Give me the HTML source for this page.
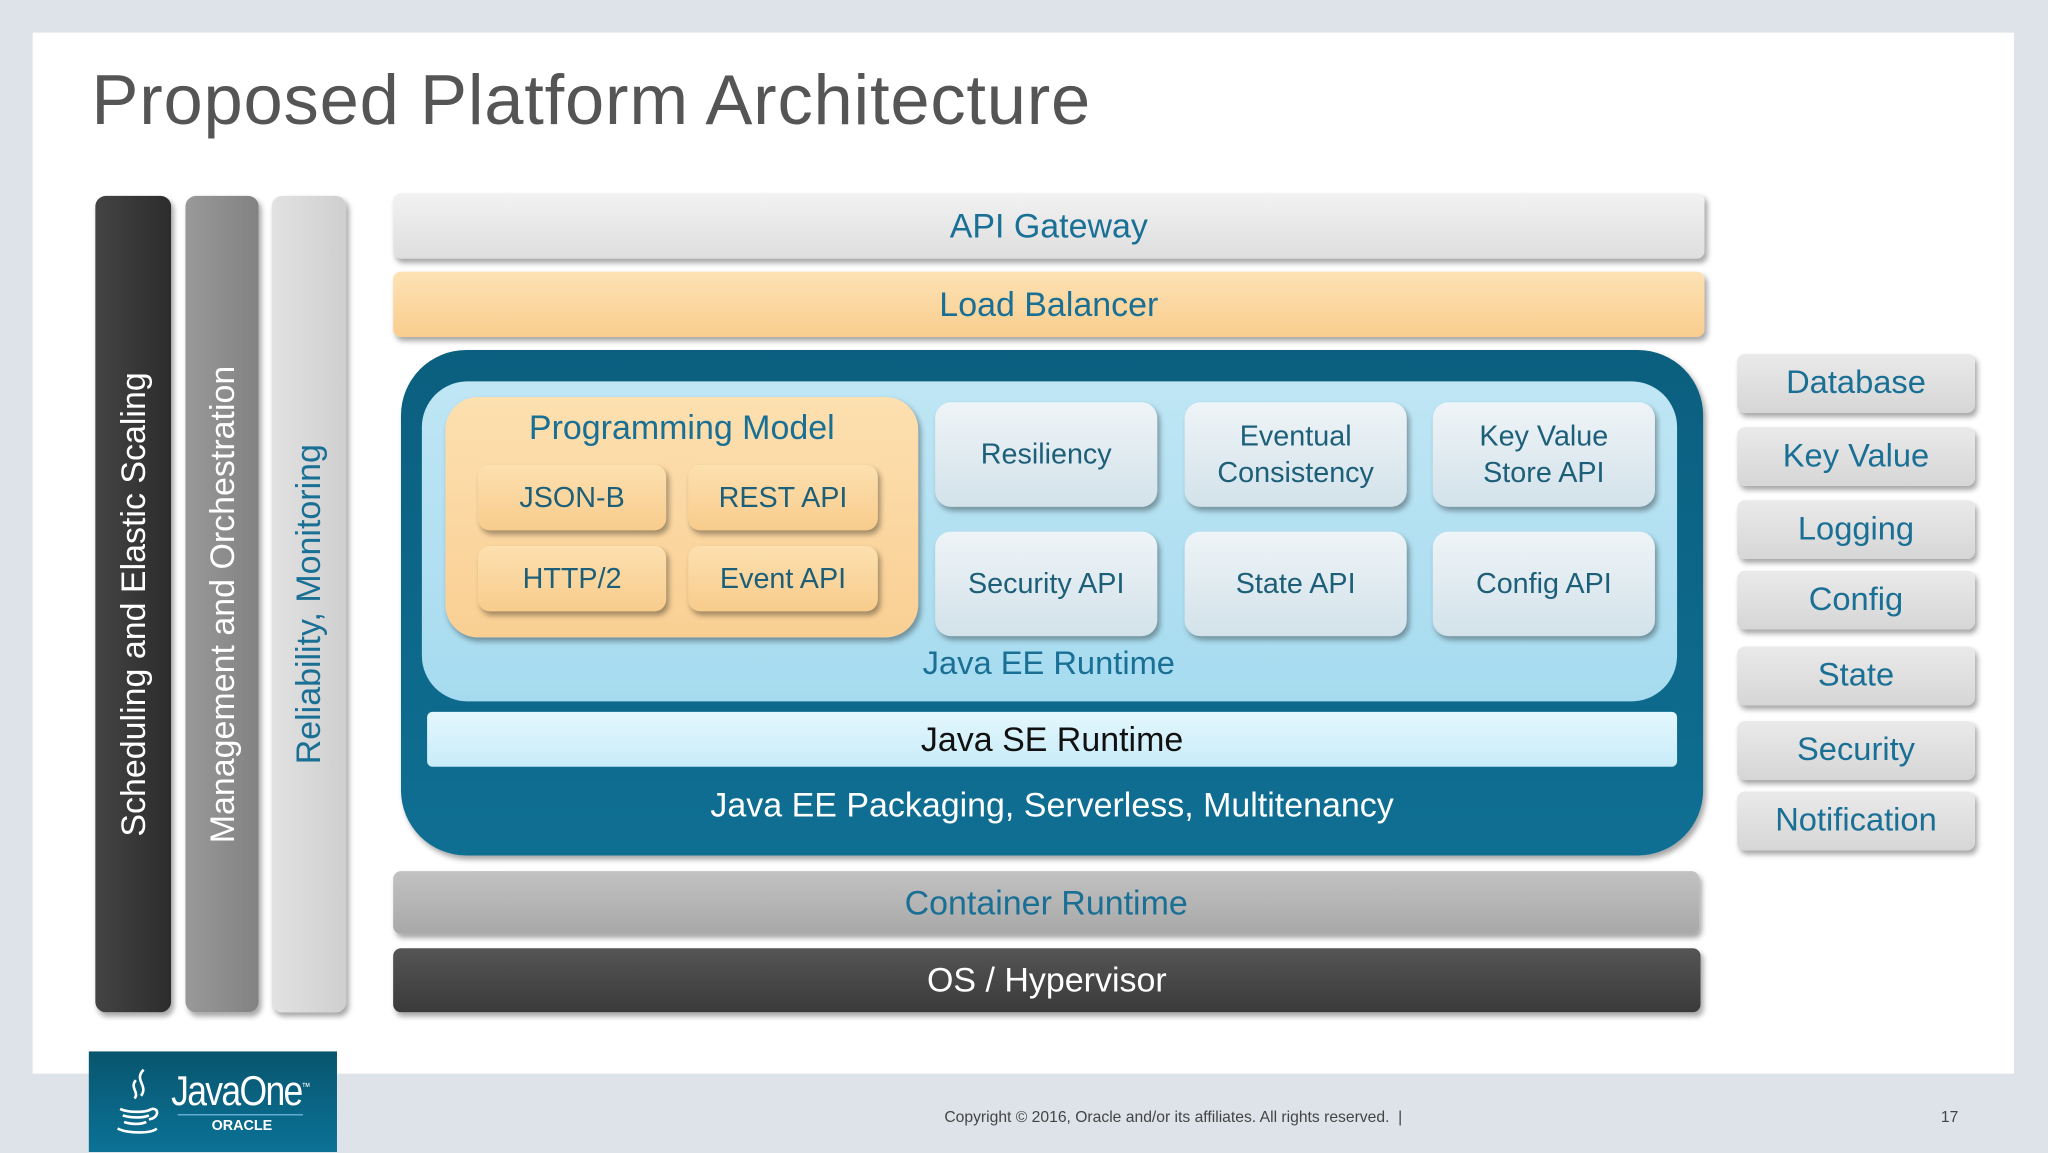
<!DOCTYPE html>
<html><head><meta charset="utf-8"><style>
html,body{margin:0;padding:0;width:2048px;height:1152px;overflow:hidden;background:#dde3e9}
#w{position:absolute;left:0;top:0;width:1568px;height:882px;transform:scale(1.306122);transform-origin:0 0;font-family:"Liberation Sans",sans-serif}
.a{position:absolute;box-sizing:border-box;display:flex;align-items:center;justify-content:center;text-align:center}
.sh{box-shadow:2px 3px 4px rgba(0,0,0,.35)}
.t{color:#1a6f95}
.g{background:linear-gradient(#eef4f7,#d3e2ea);border-radius:12px;font-size:22px;line-height:28px;color:#1d5f78}
.o{background:linear-gradient(#fde0b0,#f8cc8c);border-radius:9px;font-size:22px;color:#1d5f78}
.r{background:linear-gradient(#eaeaea,#d6d6d6);border-radius:6px;font-size:25px;color:#1a6f95;left:1330px;width:182px;height:45px}
.v{position:absolute;writing-mode:vertical-rl;transform:rotate(180deg);font-size:26px;white-space:nowrap}
</style></head><body><div id="w">
<div style="position:absolute;left:25px;top:25px;width:1517px;height:797px;background:#fff"></div>
<div style="position:absolute;left:70px;top:46px;font-size:54px;letter-spacing:0.6px;color:#555;white-space:nowrap">Proposed Platform Architecture</div>

<div class="a sh" style="left:73px;top:150px;width:58px;height:625px;background:linear-gradient(90deg,#444,#2c2c2c);border-radius:8px"><span class="v" style="color:#fff">Scheduling and Elastic Scaling</span></div>
<div class="a sh" style="left:142px;top:150px;width:56px;height:625px;background:linear-gradient(90deg,#999,#828282);border-radius:8px"><span class="v" style="color:#fff">Management and Orchestration</span></div>
<div class="a sh" style="left:208px;top:150px;width:57px;height:625px;background:linear-gradient(90deg,#e2e2e2,#cfcfcf);border-radius:8px"><span class="v t">Reliability, Monitoring</span></div>

<div class="a sh t" style="left:301px;top:148px;width:1004px;height:50px;background:linear-gradient(#f2f2f2,#dedede);border-radius:6px;font-size:26px">API Gateway</div>
<div class="a sh t" style="left:301px;top:208px;width:1004px;height:50px;background:linear-gradient(#fde2b5,#f9cd8d);border-radius:6px;font-size:26px">Load Balancer</div>

<div class="sh" style="position:absolute;left:307px;top:268px;width:997px;height:387px;background:linear-gradient(#0b5f7f,#0f6f93);border-radius:50px"></div>
<div style="position:absolute;left:323px;top:292px;width:961px;height:245px;background:linear-gradient(#bfe6f5,#a6dbef);border-radius:35px"></div>
<div class="sh" style="position:absolute;left:341px;top:304px;width:362px;height:184px;background:linear-gradient(#fde0b0,#f9cf93);border-radius:25px"></div>
<div style="position:absolute;left:341px;top:312px;width:362px;text-align:center;font-size:26px" class="t">Programming Model</div>
<div class="a sh o" style="left:366px;top:356px;width:144px;height:50px">JSON-B</div>
<div class="a sh o" style="left:527px;top:356px;width:145px;height:50px">REST API</div>
<div class="a sh o" style="left:366px;top:418px;width:144px;height:50px">HTTP/2</div>
<div class="a sh o" style="left:527px;top:418px;width:145px;height:50px">Event API</div>

<div class="a sh g" style="left:716px;top:308px;width:170px;height:80px">Resiliency</div>
<div class="a sh g" style="left:907px;top:308px;width:170px;height:80px">Eventual<br>Consistency</div>
<div class="a sh g" style="left:1097px;top:308px;width:170px;height:80px">Key Value<br>Store API</div>
<div class="a sh g" style="left:716px;top:407px;width:170px;height:80px">Security API</div>
<div class="a sh g" style="left:907px;top:407px;width:170px;height:80px">State API</div>
<div class="a sh g" style="left:1097px;top:407px;width:170px;height:80px">Config API</div>
<div style="position:absolute;left:603px;top:494px;width:400px;text-align:center;font-size:25px;white-space:nowrap" class="t">Java EE Runtime</div>

<div class="a" style="left:327px;top:545px;width:957px;height:42px;background:linear-gradient(#e4f7fd,#c8ecf9);border-radius:4px;font-size:26px;color:#111">Java SE Runtime</div>
<div style="position:absolute;left:307px;top:601px;width:997px;text-align:center;font-size:26px;color:#fff">Java EE Packaging, Serverless, Multitenancy</div>

<div class="a sh t" style="left:301px;top:667px;width:1000px;height:48px;background:linear-gradient(#c2c2c2,#a8a8a8);border-radius:6px;font-size:26px">Container Runtime</div>
<div class="a sh" style="left:301px;top:726px;width:1001px;height:49px;background:linear-gradient(#555,#3a3a3a);border-radius:6px;font-size:26px;color:#fff">OS / Hypervisor</div>

<div class="a sh r" style="top:271px">Database</div>
<div class="a sh r" style="top:327px">Key Value</div>
<div class="a sh r" style="top:383px">Logging</div>
<div class="a sh r" style="top:437px">Config</div>
<div class="a sh r" style="top:495px">State</div>
<div class="a sh r" style="top:552px">Security</div>
<div class="a sh r" style="top:606px">Notification</div>

<div style="position:absolute;left:68px;top:805px;width:190px;height:77px;background:linear-gradient(#08556e,#0b7296)">
<svg width="50" height="70" style="position:absolute;left:14px;top:8px" fill="none" stroke="#fff" stroke-width="2">
<path d="M28 6c-8 8 4 12-2 20M22 14c-5 6 3 9-1 14"/><path d="M10 36c6 3 20 3 24 0M12 41c6 2 16 2 20 0M13 46c5 2 13 2 17 0M8 51c8 4 26 4 30 0"/><path d="M34 36c6-1 6 7-2 8"/></svg>
<div style="position:absolute;left:63px;top:12px;color:#fff;font-size:32px;letter-spacing:-1.5px;transform:scaleX(.85);transform-origin:0 0">JavaOne<sup style="font-size:8px">™</sup></div>
<div style="position:absolute;left:68px;top:48px;width:96px;border-top:1px solid #6ab8d8"></div>
<div style="position:absolute;left:94px;top:51px;color:#fff;font-size:11px;font-weight:bold">ORACLE</div>
</div>
<div style="position:absolute;left:723px;top:848px;font-size:12px;color:#444">Copyright © 2016, Oracle and/or its affiliates. All rights reserved. &nbsp;|</div>
<div style="position:absolute;left:1486px;top:848px;font-size:12px;color:#444">17</div>
</div></body></html>
